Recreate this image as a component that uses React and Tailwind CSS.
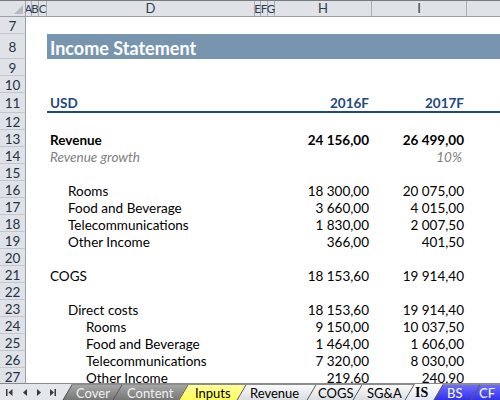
import React from "react";

const FONT = "[font-family:Lato,'Liberation_Sans',sans-serif]";

const HEAD = [
  { l: "A", c: "w-[6px]", t: "text-[11.5px]" },
  { l: "B", c: "w-[7px]", t: "text-[11.5px]" },
  { l: "C", c: "w-[8px]", t: "text-[11.5px]" },
  { l: "D", c: "w-[208px]", t: "text-[13px]" },
  { l: "E", c: "w-[6px]", t: "text-[11.5px]" },
  { l: "F", c: "w-[7px]", t: "text-[11.5px]" },
  { l: "G", c: "w-[7px]", t: "text-[11.5px]" },
  { l: "H", c: "w-[97px]", t: "text-[13px]" },
  { l: "I", c: "w-[95px]", t: "text-[13px]" },
  { l: "", c: "flex-1", t: "" },
];

const ROWS = [
  { n: 7 },
  { n: 8, type: "title" },
  { n: 9 },
  { n: 10 },
  { n: 11, type: "usd" },
  { n: 12 },
  { n: 13, label: "Revenue", h: "24 156,00", i: "26 499,00", ind: 0, bold: true },
  { n: 14, type: "growth" },
  { n: 15 },
  { n: 16, label: "Rooms", h: "18 300,00", i: "20 075,00", ind: 1 },
  { n: 17, label: "Food and Beverage", h: "3 660,00", i: "4 015,00", ind: 1 },
  { n: 18, label: "Telecommunications", h: "1 830,00", i: "2 007,50", ind: 1 },
  { n: 19, label: "Other Income", h: "366,00", i: "401,50", ind: 1 },
  { n: 20 },
  { n: 21, label: "COGS", h: "18 153,60", i: "19 914,40", ind: 0 },
  { n: 22 },
  { n: 23, label: "Direct costs", h: "18 153,60", i: "19 914,40", ind: 1 },
  { n: 24, label: "Rooms", h: "9 150,00", i: "10 037,50", ind: 2 },
  { n: 25, label: "Food and Beverage", h: "1 464,00", i: "1 606,00", ind: 2 },
  { n: 26, label: "Telecommunications", h: "7 320,00", i: "8 030,00", ind: 2 },
  { n: 27, label: "Other Income", h: "219,60", i: "240,90", ind: 2 },
];

const IND = ["pl-[3px]", "pl-[21px]", "pl-[39px]"];

function RowNum({ n, h }) {
  return (
    <div
      className={`w-[26px] shrink-0 ${h} flex items-center justify-center pt-[2px] border-r border-b border-r-[#9aa1aa] border-b-[#c3c7cd] bg-[#dfe3e8] text-[13.5px] text-[#263244]`}
    >
      {n}
    </div>
  );
}

function Row({ r }) {
  if (r.type === "title") {
    return (
      <div className="flex h-[25px] shrink-0">
        <RowNum n={r.n} h="h-[25px]" />
        <div className="w-[21px] shrink-0" />
        <div className="flex-1 flex items-center pt-[3px] bg-[#7895b0] pl-[3px] text-[18px] font-bold text-white">
          Income Statement
        </div>
      </div>
    );
  }
  if (r.type === "usd") {
    return (
      <div className="flex h-[20px] shrink-0">
        <RowNum n={r.n} h="h-[20px]" />
        <div className="w-[21px] shrink-0" />
        <div className="flex-1 flex items-end border-b-2 border-[#1f497d] text-[13.5px] leading-[16px] font-bold text-[#1f497d]">
          <div className="w-[208px] shrink-0 pl-[3px]">USD</div>
          <div className="w-[20px] shrink-0" />
          <div className="w-[97px] shrink-0 text-right pr-[3px]">2016F</div>
          <div className="w-[95px] shrink-0 text-right pr-[3px]">2017F</div>
        </div>
      </div>
    );
  }
  if (r.type === "growth") {
    return (
      <div className="flex h-[17px] shrink-0">
        <RowNum n={r.n} h="h-[17px]" />
        <div className="w-[21px] shrink-0" />
        <div className="flex-1 flex items-center pt-[3px] text-[13.5px] italic text-[#7f7f7f]">
          <div className="w-[208px] shrink-0 pl-[3px] whitespace-nowrap">Revenue growth</div>
          <div className="w-[20px] shrink-0" />
          <div className="w-[97px] shrink-0" />
          <div className="w-[95px] shrink-0 text-right pr-[5px]">10%</div>
        </div>
      </div>
    );
  }
  return (
    <div className="flex h-[17px] shrink-0">
      <RowNum n={r.n} h="h-[17px]" />
      <div className="w-[21px] shrink-0" />
      {r.label ? (
        <div
          className={`flex-1 flex items-center pt-[3px] text-[13.5px] leading-[16px] text-black ${r.bold ? "font-bold" : ""}`}
        >
          <div className={`w-[208px] shrink-0 whitespace-nowrap ${IND[r.ind]}`}>{r.label}</div>
          <div className="w-[20px] shrink-0" />
          <div className="w-[97px] shrink-0 text-right pr-[3px] whitespace-nowrap">{r.h}</div>
          <div className="w-[95px] shrink-0 text-right pr-[3px] whitespace-nowrap">{r.i}</div>
        </div>
      ) : (
        <div className="flex-1" />
      )}
    </div>
  );
}

const TABS = [
  { label: "Cover", box: "w-[60px]", pl: "pl-[14px]", g: ["#a8a8a8", "#747474"], text: "text-[#f0f0f0]" },
  { label: "Content", box: "w-[76px] -ml-[10px]", pl: "pl-[15px]", g: ["#a8a8a8", "#747474"], text: "text-[#f0f0f0]" },
  { label: "Inputs", box: "w-[68px] -ml-[10px]", pl: "pl-[17px]", g: ["#ffffa0", "#ffff55"], text: "text-black" },
  { label: "Revenue", box: "w-[80px] -ml-[10px]", pl: "pl-[14px]", g: ["#fbfbfb", "#d9dce0"], text: "text-black" },
  { label: "COGS", box: "w-[56px] -ml-[10px]", pl: "pl-[12px]", g: ["#fbfbfb", "#d9dce0"], text: "text-black" },
  { label: "SG&A", box: "w-[62px] -ml-[10px]", pl: "pl-[15px]", g: ["#fbfbfb", "#d9dce0"], text: "text-black" },
  { label: "IS", box: "w-[39px] -ml-[10px]", pl: "pl-[11px]", g: ["#ffffff", "#dfe6f3"], text: "text-black font-bold [font-family:'Liberation_Serif',serif] text-[14px]", active: true },
  { label: "BS", box: "w-[47px] -ml-[10px]", pl: "pl-[14px]", g: ["#7070ff", "#2e2ee8"], text: "text-white" },
  { label: "CF", box: "w-[40px] -ml-[10px]", pl: "pl-[9px]", g: ["#7070ff", "#2e2ee8"], text: "text-white" },
];

function Tab({ t, idx }) {
  const W = parseInt(t.box.match(/w-\[(\d+)px\]/)[1], 10);
  const id = `tg${idx}`;
  return (
    <div className={`relative h-[17px] shrink-0 ${t.box}`}>
      <svg className="absolute left-0 top-0" width={W} height="17">
        <defs>
          <linearGradient id={id} x1="0" y1="0" x2="0" y2="1">
            <stop offset="0" stopColor={t.g[0]} />
            <stop offset="1" stopColor={t.g[1]} />
          </linearGradient>
        </defs>
        <polygon points={`0,17 10,0 ${W},0 ${W},17`} fill={`url(#${id})`} />
        <line x1="0.5" y1="17" x2="10.5" y2="0" stroke="#5a5a5a" strokeWidth="1" />
        {t.active ? null : <line x1="10" y1="0.5" x2={W} y2="0.5" stroke="#8c8c8c" strokeWidth="1" />}
      </svg>
      <span
        className={`relative block h-[17px] leading-[18px] whitespace-nowrap text-[13px] ${t.pl} ${t.text}`}
      >
        {t.label}
      </span>
    </div>
  );
}

function NavArrows() {
  const c = "#3a3a3a";
  return (
    <svg width="62" height="17" className="shrink-0">
      <rect x="6" y="5" width="1.5" height="7" fill={c} />
      <polygon points="8.5,8.5 12.5,5 12.5,12" fill={c} />
      <polygon points="23,8.5 27,5 27,12" fill={c} />
      <polygon points="41,8.5 37,5 37,12" fill={c} />
      <polygon points="54,8.5 50,5 50,12" fill={c} />
      <rect x="54.5" y="5" width="1.5" height="7" fill={c} />
    </svg>
  );
}

export default function App() {
  return (
    <div className={`w-[500px] h-[400px] overflow-hidden bg-white flex flex-col ${FONT}`}>
      <div className="h-[383px] overflow-hidden flex flex-col shrink-0">
        {/* column header */}
        <div className="flex h-[17px] shrink-0 border-t border-[#7a7a7a] bg-[#dfe3e8]">
          <div className="relative w-[26px] shrink-0 border-r border-b border-r-[#9aa1aa] border-b-[#9aa1aa]">
            <svg className="absolute right-[2px] bottom-[2px]" width="9" height="9">
              <polygon points="9,0 9,9 0,9" fill="#b6bbc2" />
            </svg>
          </div>
          {HEAD.map((h, i) => (
            <div
              key={i}
              className={`${h.c} ${h.t} shrink-0 h-full flex items-center justify-center pt-[1px] border-b border-b-[#9aa1aa] ${h.l ? "border-r border-r-[#a9afb7]" : ""} text-[#2f3b4c] overflow-visible whitespace-nowrap`}
            >
              {h.l}
            </div>
          ))}
        </div>
        {ROWS.map((r) => (
          <Row key={r.n} r={r} />
        ))}
      </div>
      <div className="flex h-[17px] shrink-0 border-t border-[#8a8a8a] bg-[#e3e6ea] overflow-hidden">
        <NavArrows />
        {TABS.map((t, i) => (
          <Tab key={t.label} t={t} idx={i} />
        ))}
      </div>
    </div>
  );
}
